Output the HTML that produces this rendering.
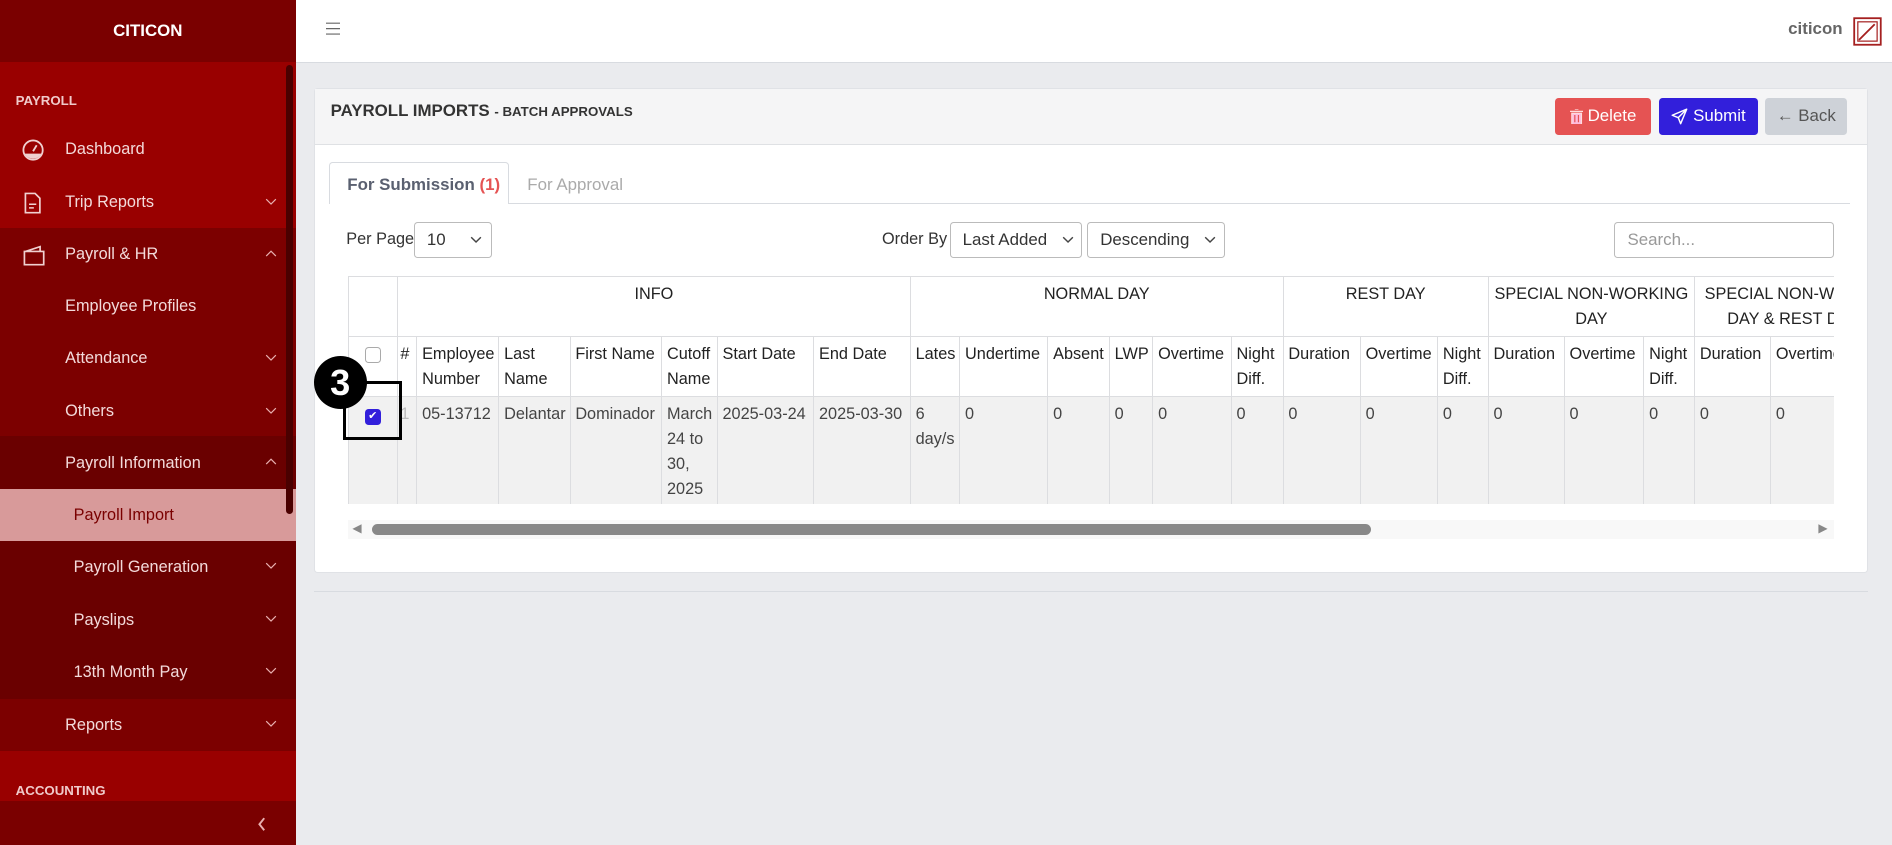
<!DOCTYPE html>
<html><head><meta charset="utf-8">
<style>
html{zoom:1.2066}
body{margin:0;width:1568px;height:700px;overflow:hidden;background:#eaebee;font-family:"Liberation Sans",sans-serif;font-size:13.5px;color:#333;position:relative}
.abs{position:absolute}
#sb{left:0;top:0;width:245px;height:700px;background:#7a0000;color:#f3dada}
.row{position:absolute;left:0;width:245px;display:flex;align-items:center}
.row span{position:absolute;left:54px}
.chev{position:absolute;left:220px;top:7px}
table{border-collapse:collapse;table-layout:fixed}
td,th{border:1px solid #dcdde0;padding:4px 4px;vertical-align:top;text-align:left;line-height:20.5px;font-size:13.5px;overflow:hidden;white-space:nowrap}
th{font-weight:normal;color:#222}
.g th{text-align:center;height:40px}
tbody td{background:#f1f1f1;height:81px;color:#444}
.btn{position:absolute;top:81px;height:31px;border-radius:3px;font-size:14px;display:flex;align-items:center;justify-content:center;gap:4px}
.sel{position:absolute;top:184px;height:30px;border:1px solid #bbb;border-radius:3px;background:#fff;font-size:14px;display:flex;align-items:center;padding-left:10px;box-sizing:border-box}
</style></head><body>
<svg width="0" height="0" style="position:absolute"><defs>
<symbol id="dn" viewBox="0 0 10 6"><path d="M1 1l4 4 4-4" fill="none" stroke="#e8b0b0" stroke-width="1"/></symbol>
<symbol id="up" viewBox="0 0 10 6"><path d="M1 5l4-4 4 4" fill="none" stroke="#e8b0b0" stroke-width="1"/></symbol>
<symbol id="dd" viewBox="0 0 10 6"><path d="M1 1l4 4 4-4" fill="none" stroke="#444" stroke-width="1.2"/></symbol>
</defs></svg>
<div id="sb" class="abs">
 <div class="abs" style="left:0;top:0;width:245px;height:51px;display:flex;align-items:center;justify-content:center;font-weight:bold;font-size:14px;color:#fff">CITICON</div>
 <div class="abs" style="top:51px;left:0;width:245px;height:138px;background:#990000"></div>
 <div class="abs" style="top:189px;left:0;width:245px;height:172px;background:#7c0000"></div>
 <div class="abs" style="top:361px;left:0;width:245px;height:218px;background:#6a0000"></div>
 <div class="abs" style="top:405px;left:0;width:245px;height:43px;background:#d89a9a"></div>
 <div class="abs" style="top:579px;left:0;width:245px;height:43px;background:#7c0000"></div>
 <div class="abs" style="top:622px;left:0;width:245px;height:42px;background:#990000"></div>
 <div class="abs" style="top:664px;left:0;width:245px;height:36px;background:#7a0000"></div>
 <div class="abs" style="left:237px;top:54px;width:6px;height:372px;background:#4a0000;border-radius:3px"></div>
 <div class="abs" style="left:13px;top:77px;font-size:11px;font-weight:bold;color:#f0caca">PAYROLL</div>
 <div class="abs" style="left:13px;top:649px;font-size:11px;font-weight:bold;color:#f0caca">ACCOUNTING</div>
 <div class="row" style="top:113px;height:22px"><svg class="abs" style="left:17px" width="20" height="20" viewBox="0 0 20 20"><circle cx="10" cy="10" r="8" fill="none" stroke="#f0d0d0" stroke-width="1.5"/><path d="M3 13h14a8 8 0 0 1-14 0z" fill="#f0d0d0"/><path d="M10 11l3-5" stroke="#f0d0d0" stroke-width="1.5"/></svg><span>Dashboard</span></div>
 <div class="row" style="top:157px;height:22px"><svg class="abs" style="left:19px" width="16" height="20" viewBox="0 0 16 20"><path d="M2 2h8l4 4v12H2z" fill="none" stroke="#f0d0d0" stroke-width="1.4"/><path d="M5 11h6M5 14h4" stroke="#f0d0d0" stroke-width="1.3"/></svg><span>Trip Reports</span><svg class="chev" width="10" height="6"><use href="#dn"/></svg></div>
 <div class="row" style="top:200px;height:22px"><svg class="abs" style="left:18px" width="20" height="20" viewBox="0 0 20 20"><path d="M2 7h16v11H2zM3 7l12-4v4" fill="none" stroke="#f0d0d0" stroke-width="1.4"/></svg><span>Payroll &amp; HR</span><svg class="chev" width="10" height="6"><use href="#up"/></svg></div>
 <div class="row" style="top:243px;height:22px"><span>Employee Profiles</span></div>
 <div class="row" style="top:286px;height:22px"><span>Attendance</span><svg class="chev" width="10" height="6"><use href="#dn"/></svg></div>
 <div class="row" style="top:330px;height:22px"><span>Others</span><svg class="chev" width="10" height="6"><use href="#dn"/></svg></div>
 <div class="row" style="top:373px;height:22px"><span>Payroll Information</span><svg class="chev" width="10" height="6"><use href="#up"/></svg></div>
 <div class="row" style="top:416px;height:22px;color:#7a0000"><span style="left:61px">Payroll Import</span></div>
 <div class="row" style="top:459px;height:22px"><span style="left:61px">Payroll Generation</span><svg class="chev" width="10" height="6"><use href="#dn"/></svg></div>
 <div class="row" style="top:503px;height:22px"><span style="left:61px">Payslips</span><svg class="chev" width="10" height="6"><use href="#dn"/></svg></div>
 <div class="row" style="top:546px;height:22px"><span style="left:61px">13th Month Pay</span><svg class="chev" width="10" height="6"><use href="#dn"/></svg></div>
 <div class="row" style="top:590px;height:22px"><span>Reports</span><svg class="chev" width="10" height="6"><use href="#dn"/></svg></div>
 <svg class="abs" style="left:213px;top:677px" width="8" height="12" viewBox="0 0 8 12"><path d="M6 1L2 6l4 5" fill="none" stroke="#e8b0b0" stroke-width="1.6"/></svg>
</div>
<div class="abs" style="left:245px;top:0;width:1323px;height:51px;background:#fff;border-bottom:1px solid #d8dbe0"></div>
<svg class="abs" style="left:270px;top:18px" width="12" height="11" viewBox="0 0 12 11"><path d="M0 1h12M0 5.5h12M0 10h12" stroke="#666" stroke-width="1"/></svg>
<div class="abs" style="left:1482px;top:16px;font-size:14px;font-weight:bold;color:#666">citicon</div>
<svg class="abs" style="left:1536px;top:14px" width="24" height="24" viewBox="0 0 24 24"><rect x="1" y="1" width="22" height="22" fill="none" stroke="#a52020" stroke-width="1.5"/><rect x="4" y="4" width="16" height="16" fill="none" stroke="#a52020" stroke-width="1"/><path d="M5 19L18 6" stroke="#a52020" stroke-width="1.5"/></svg>
<div class="abs" style="left:260px;top:73px;width:1288px;height:402px;background:#fff;border:1px solid #e0e2e6;box-sizing:border-box;border-radius:3px"></div>
<div class="abs" style="left:261px;top:74px;width:1286px;height:45px;background:#f5f5f6;border-bottom:1px solid #dfe1e4"></div>
<div class="abs" style="left:274px;top:84px;font-weight:bold;font-size:14px;color:#333">PAYROLL IMPORTS <span style="font-size:11px">- BATCH APPROVALS</span></div>
<div class="btn" style="left:1289px;width:79px;background:#e55353;color:#fff"><svg width="11" height="13" viewBox="0 0 11 13"><path d="M0 2h11M4 0h3M1.5 3.5h8V13h-8z" fill="#fbd" stroke="#fdd" stroke-width="1"/><path d="M4 5v6M7 5v6" stroke="#e55353"/></svg>Delete</div>
<div class="btn" style="left:1375px;width:82px;background:#321fdb;color:#fff"><svg width="14" height="14" viewBox="0 0 14 14"><path d="M13 1L1 6l5 2 2 5z M13 1L6 8" fill="none" stroke="#fff" stroke-width="1.2" stroke-linejoin="round"/></svg>Submit</div>
<div class="btn" style="left:1463px;width:68px;background:#ced2d8;color:#555">&#x2190; Back</div>
<div class="abs" style="left:273px;top:168px;width:1260px;height:1px;background:#d8dbe0"></div>
<div class="abs" style="left:273px;top:134px;width:149px;height:35px;background:#fff;border:1px solid #d8dbe0;border-bottom:none;box-sizing:border-box;border-radius:3px 3px 0 0;font-weight:bold;font-size:14px;color:#5a6070;padding:10px 0 0 14px">For Submission <span style="color:#e55353">(1)</span></div>
<div class="abs" style="left:437px;top:145px;font-size:14px;color:#aaa">For Approval</div>
<div class="abs" style="left:287px;top:191px">Per Page</div>
<div class="sel" style="left:343px;width:65px">10 <svg style="margin-left:20px" width="10" height="6"><use href="#dd"/></svg></div>
<div class="abs" style="left:731px;top:191px">Order By</div>
<div class="sel" style="left:787px;width:110px">Last Added <svg style="margin-left:12px" width="10" height="6"><use href="#dd"/></svg></div>
<div class="sel" style="left:901px;width:114px">Descending <svg style="margin-left:12px" width="10" height="6"><use href="#dd"/></svg></div>
<div class="sel" style="left:1338px;width:182px;color:#999">Search...</div>
<div class="abs" style="left:288px;top:229px;width:1232px;height:189px;overflow:hidden">
<table style="width:1260px">
<colgroup><col style="width:41px"><col style="width:16px"><col style="width:68px"><col style="width:59px"><col style="width:76px"><col style="width:46px"><col style="width:80px"><col style="width:80px"><col style="width:41px"><col style="width:73px"><col style="width:51px"><col style="width:36px"><col style="width:65px"><col style="width:43px"><col style="width:64px"><col style="width:64px"><col style="width:42px"><col style="width:63px"><col style="width:66px"><col style="width:42px"><col style="width:63px"><col style="width:82px"></colgroup>
<tr class="g"><th></th><th colspan="7">INFO</th><th colspan="6">NORMAL DAY</th><th colspan="3">REST DAY</th><th colspan="3">SPECIAL NON-WORKING<br>DAY</th><th colspan="2" style="text-align:left;padding-left:8px">SPECIAL NON-WORKING<br>&nbsp;&nbsp;&nbsp;&nbsp;&nbsp;DAY &amp; REST DAY</th></tr>
<tr><th style="height:40px;text-align:center"><span style="display:inline-block;width:12px;height:12px;border:1px solid #aaa;border-radius:3px;background:#fff;margin-top:4px"></span></th><th style="padding:4px 2px">#</th><th>Employee<br>Number</th><th>Last<br>Name</th><th>First Name</th><th>Cutoff<br>Name</th><th>Start Date</th><th>End Date</th><th>Lates</th><th>Undertime</th><th>Absent</th><th>LWP</th><th>Overtime</th><th>Night<br>Diff.</th><th>Duration</th><th>Overtime</th><th>Night<br>Diff.</th><th>Duration</th><th>Overtime</th><th>Night<br>Diff.</th><th>Duration</th><th>Overtime</th></tr>
<tbody><tr><td style="text-align:center"><span style="display:inline-block;width:13px;height:13px;border-radius:3px;background:#321fdb;color:#fff;font-size:9px;line-height:13px;margin-top:4px">&#x2714;</span></td><td style="padding:4px 2px;color:#bbb">1</td><td>05-13712</td><td>Delantar</td><td>Dominador</td><td>March<br>24 to<br>30,<br>2025</td><td>2025-03-24</td><td>2025-03-30</td><td>6<br>day/s</td><td>0</td><td>0</td><td>0</td><td>0</td><td>0</td><td>0</td><td>0</td><td>0</td><td>0</td><td>0</td><td>0</td><td>0</td><td>0</td></tr></tbody>
</table></div>
<div class="abs" style="left:288px;top:431px;width:1232px;height:16px;background:#f8f8f8"></div>
<div class="abs" style="left:308px;top:434px;width:828px;height:9px;background:#888;border-radius:5px"></div>
<div class="abs" style="left:292px;top:432px;font-size:10px;color:#888">&#x25C0;</div>
<div class="abs" style="left:1507px;top:432px;font-size:10px;color:#888">&#x25B6;</div>
<div class="abs" style="left:260px;top:490px;width:1288px;height:1px;background:#d8dbe0"></div>
<div class="abs" style="left:300px;top:316px;width:33px;height:49px;border-top:3px solid #000;border-right:3px solid #000;box-sizing:border-box"></div>
<div class="abs" style="left:284px;top:338px;width:49px;height:27px;border:3px solid #000;border-top:none;box-sizing:border-box"></div>
<div class="abs" style="left:260px;top:295px;width:44px;height:44px;border-radius:50%;background:#000;color:#fff;font-weight:bold;font-size:30px;text-align:center;line-height:44px">3</div>
</body></html>
